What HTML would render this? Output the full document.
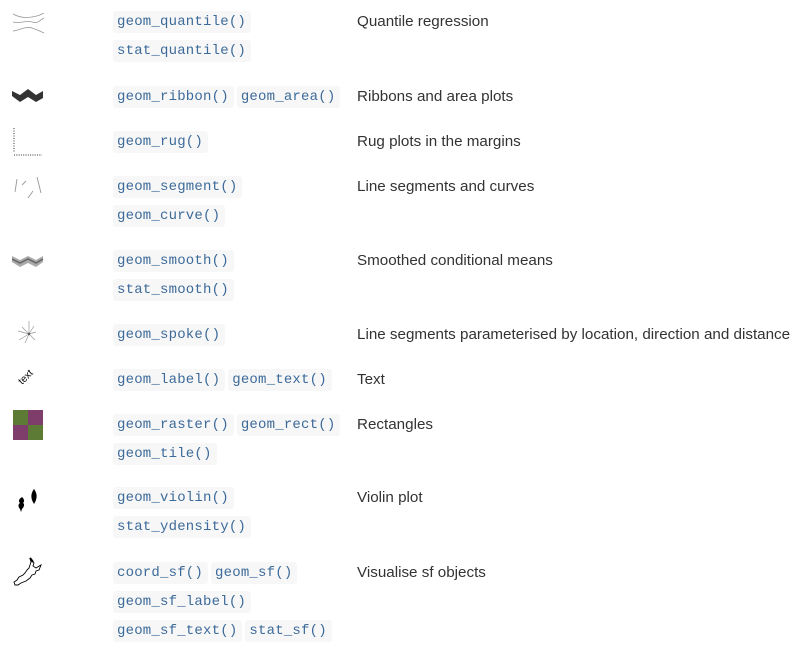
<!DOCTYPE html>
<html><head><meta charset="utf-8"><style>
body{margin:0;width:804px;height:648px;background:#fff;position:relative;overflow:hidden;font-family:"Liberation Sans",sans-serif}
.c{position:absolute;left:113px;height:22px;display:flex}
.c span{display:inline-block;height:22px;line-height:23px;padding:0 5px 0 4px;margin-right:3px;background:#f7f7f7;border-radius:3px;font-family:"Liberation Mono",monospace;font-size:14px;letter-spacing:0.2px;color:#3c6a9a}
.l{position:absolute;left:357px;font-size:15.2px;color:#333;line-height:20px;white-space:nowrap}
svg{position:absolute}
</style></head><body>

<svg style="left:12px;top:12px" width="34" height="22" viewBox="0 0 34 22"><g fill="none" stroke="#999" stroke-width="0.8"><path d="M1 2 C8 6,14 6,20 5 S28 3,32 1"/><path d="M1 10 C8 12,14 8,20 10 S28 8,32 6"/><path d="M1 19 C8 18,14 14,20 16 S28 19,32 21"/></g></svg>
<div class="c" style="top:11px"><span>geom_quantile()</span></div>
<div class="c" style="top:40px"><span>stat_quantile()</span></div>
<div class="l" style="top:12px">Quantile regression</div>

<svg style="left:12px;top:88px" width="32" height="16" viewBox="0 0 32 16"><path d="M0 3 L8 7 L16 1 L24 7 L31 3 L31 10 L24 14 L16 9 L8 14 L0 8Z" fill="#333"/></svg>
<div class="c" style="top:86px"><span>geom_ribbon()</span><span>geom_area()</span></div>
<div class="l" style="top:87px">Ribbons and area plots</div>

<svg style="left:12px;top:127px" width="32" height="30" viewBox="0 0 32 30"><g stroke="#333" stroke-width="1"><path d="M2 1V26" stroke-dasharray="1 1.5"/><path d="M2 28H30" stroke-dasharray="1 1.3"/></g></svg>
<div class="c" style="top:131px"><span>geom_rug()</span></div>
<div class="l" style="top:132px">Rug plots in the margins</div>

<svg style="left:12px;top:175px" width="32" height="26" viewBox="0 0 32 26"><g stroke="#999" stroke-width="0.9"><path d="M5 4L3 17"/><path d="M10 10L14 6"/><path d="M25 2L29 18"/><path d="M16 23L21 16"/></g></svg>
<div class="c" style="top:176px"><span>geom_segment()</span></div>
<div class="c" style="top:205px"><span>geom_curve()</span></div>
<div class="l" style="top:177px">Line segments and curves</div>

<svg style="left:12px;top:254px" width="32" height="16" viewBox="0 0 32 16"><path d="M0 2 L8 6 L16 2 L24 6 L31 2 L31 8 L24 13 L16 9 L8 13 L0 8Z" fill="#aaa"/><path d="M0 5 L8 9 L16 5 L24 9 L31 5" fill="none" stroke="#666" stroke-width="1.5"/></svg>
<div class="c" style="top:250px"><span>geom_smooth()</span></div>
<div class="c" style="top:279px"><span>stat_smooth()</span></div>
<div class="l" style="top:251px">Smoothed conditional means</div>

<svg style="left:16px;top:320px" width="22" height="24" viewBox="0 0 22 24"><g stroke="#999" stroke-width="0.7"><path d="M13 14L13 1"/><path d="M13 14L2 11"/><path d="M13 14L3 20"/><path d="M13 14L9 23"/><path d="M13 14L19 20"/><path d="M13 14L20 12"/><path d="M13 14L18 6"/><path d="M13 14L6 7"/></g><circle cx="13" cy="14" r="1.2" fill="#555"/></svg>
<div class="c" style="top:324px"><span>geom_spoke()</span></div>
<div class="l" style="top:325px">Line segments parameterised by location, direction and distance</div>

<div style="position:absolute;left:18px;top:372px;font-size:10px;transform:rotate(-45deg);color:#000;font-family:'Liberation Sans',sans-serif">text</div>
<div class="c" style="top:369px"><span>geom_label()</span><span>geom_text()</span></div>
<div class="l" style="top:370px">Text</div>

<svg style="left:13px;top:410px" width="30" height="30" viewBox="0 0 30 30"><rect x="0" y="0" width="15" height="15" fill="#5e7b36"/><rect x="15" y="0" width="15" height="15" fill="#7e3d6a"/><rect x="0" y="15" width="15" height="15" fill="#7e3d6a"/><rect x="15" y="15" width="15" height="15" fill="#5e7b36"/></svg>
<div class="c" style="top:414px"><span>geom_raster()</span><span>geom_rect()</span></div>
<div class="c" style="top:443px"><span>geom_tile()</span></div>
<div class="l" style="top:415px">Rectangles</div>

<svg style="left:16px;top:488px" width="26" height="26" viewBox="0 0 26 26"><path d="M6 9 C8 11,9 13,7 15 C9 16,8 19,6 21 L5 24 L4 21 C2 19,2 16,4 15 C2 13,3 11,6 9Z" fill="#000"/><path d="M18 1 C21 5,22 10,18 16 C14 10,15 5,18 1Z" fill="#000"/></svg>
<div class="c" style="top:487px"><span>geom_violin()</span></div>
<div class="c" style="top:516px"><span>stat_ydensity()</span></div>
<div class="l" style="top:488px">Violin plot</div>

<svg style="left:12px;top:556px" width="32" height="32" viewBox="0 0 32 32"><path d="M18 2 L22 7 L21 10 L24 12 L29 9 L27 14 L24 15 L23 18 L20 19 L18 22 L14 25 L9 27 L6 29 L3 29 L2 26 L5 24 L7 21 L11 19 L13 17 L15 14 L17 12 L18 9 L19 6Z" fill="#fff" stroke="#000" stroke-width="0.9"/><path d="M18 2 L21 6" stroke="#000" stroke-width="2"/></svg>
<div class="c" style="top:562px"><span>coord_sf()</span><span>geom_sf()</span></div>
<div class="c" style="top:591px"><span>geom_sf_label()</span></div>
<div class="c" style="top:620px"><span>geom_sf_text()</span><span>stat_sf()</span></div>
<div class="l" style="top:563px">Visualise sf objects</div>

</body></html>
